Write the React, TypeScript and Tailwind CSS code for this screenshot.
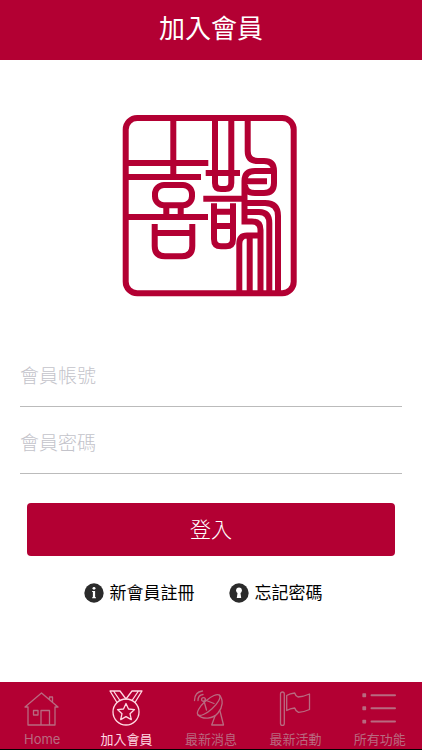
import type { ReactNode } from "react";

function SealLogo() {
  return (
    <svg
      viewBox="0 0 175 182"
      className="h-[182px] w-[175px]"
      fill="none"
      stroke="#b30033"
      strokeWidth="6"
      role="img"
      aria-label="喜鵲"
    >
      <rect x="3.7" y="3" width="168" height="175.3" rx="11.5" />
      <path d="M51.3 3V62M3.7 48H86.3M3.7 62H79" />
      <rect x="33" y="70" width="37" height="20.3" rx="9" />
      <path d="M44.3 91V101M58.7 91V101M3.7 102H86" />
      <path d="M32.7 109V131Q32.7 141.3 43 141.3H60Q70.3 141.3 70.3 131V109M32.7 118H70.3" />
      <path d="M93 3V68Q93 74 99 74H103.3Q109.3 74 109.3 68V3M83.7 58H118M81.3 83.7H124" />
      <path d="M92 88.3V124Q92 131.3 99 131.3H104Q111 131.3 111 124V88.3M92 96.7H111M92 111H111" />
      <path d="M125.7 3V36Q125.7 46 136 46H142Q152 46 152 56V68Q152 78 142 78H133Q123 78 123 70" />
      <path d="M151 56H133Q122.500 56 122.500 66V106.500H130Q138.500 106.500 138.500 115V178M125 66.300H145" />
      <path d="M122.500 97H137Q147.300 97 147.300 108V178M122.500 88H143Q156 88 156 101V178" />
      <path d="M138.500 120.500H125Q117.300 120.500 117.300 129V178M127.700 120.500V178" />
    </svg>
  );
}

function Field({ id, type, label }: { id: string; type: string; label: string }) {
  return (
    <label htmlFor={id} className="block border-b border-[#bbbbbb]">
      <input
        id={id}
        type={type}
        placeholder={label}
        aria-label={label}
        className="block h-[60px] w-full bg-transparent text-[19px] font-light text-black outline-none placeholder:text-[#c3c3ca]"
      />
    </label>
  );
}

function NavItem({ label, active, children }: { label: string; active?: boolean; children: ReactNode }) {
  return (
    <a
      href="#"
      aria-current={active ? "page" : undefined}
      className={
        active
          ? "flex flex-1 flex-col items-center gap-[5px] text-[#ffd9e3]"
          : "flex flex-1 flex-col items-center gap-[5px] text-[#b96a80]"
      }
    >
      <svg
        viewBox="0 0 36 36"
        className="size-9"
        fill="none"
        stroke="currentColor"
        strokeWidth="1.3"
        strokeLinejoin="round"
        strokeLinecap="round"
        aria-hidden="true"
      >
        {children}
      </svg>
      <span className="text-[13px] leading-4">{label}</span>
    </a>
  );
}

export default function App() {
  return (
    <div className="flex min-h-screen flex-col bg-white font-['Inter','Noto_Sans_CJK_TC',sans-serif]">
      <header className="flex h-[60px] items-center justify-center bg-[#b30033] pb-0.5">
        <h1 className="text-[26px] leading-8 text-white">加入會員</h1>
      </header>

      <main className="flex flex-1 flex-col px-5">
        <div className="flex justify-center pt-[55px] pr-1 pb-[49px]">
          <SealLogo />
        </div>

        <form className="flex flex-col gap-1.5" onSubmit={(e) => e.preventDefault()}>
          <Field id="account" type="text" label="會員帳號" />
          <Field id="password" type="password" label="會員密碼" />
          <button
            type="submit"
            className="mx-[7px] mt-[23px] h-[53px] rounded bg-[#b30033] text-[21px] font-light text-white"
          >
            登入
          </button>
        </form>

        <div className="mt-[25px] flex justify-center gap-[34px] pr-4 text-[17px] leading-6 text-black">
          <a href="#" className="flex items-center gap-1.5">
            <svg viewBox="0 0 18 18" className="size-5" aria-hidden="true">
              <circle cx="9" cy="9" r="8.700" fill="#2b2b2b" />
              <circle cx="9" cy="4.800" r="1.300" fill="#fff" />
              <path d="M7.300 7.200H10V12.800H10.800V13.800H7.300V12.800H8V8.200H7.300Z" fill="#fff" />
            </svg>
            新會員註冊
          </a>
          <a href="#" className="flex items-center gap-1.5">
            <svg viewBox="0 0 18 18" className="size-5" aria-hidden="true">
              <circle cx="9" cy="9" r="8.700" fill="#2b2b2b" />
              <circle cx="9" cy="6.600" r="2.600" fill="#fff" />
              <path d="M7.800 8H10.200L11 13.500H7Z" fill="#fff" />
            </svg>
            忘記密碼
          </a>
        </div>
      </main>

      <nav className="flex h-[68px] border-b border-black bg-[#b30033] pt-2">
        <NavItem label="Home">
          <path d="M1 17L17.500 3L34 17H31V35H4V17ZM17 35V20.500H25.500V35M9.500 20.500H14V25H9.500ZM25.500 9.500V7H28.500V12" />
        </NavItem>
        <NavItem label="加入會員" active>
          <circle cx="17" cy="22" r="13" />
          <path d="M17 13.500L19.500 19L25.500 19.600L21 23.700L22.300 29.600L17 26.600L11.700 29.600L13 23.700L8.500 19.600L14.500 19Z" />
          <path d="M8 12.500L1 1H11L17 9L23 1H33L26 12.500M4.500 1L11 10.500M29.500 1L23 10.500" />
        </NavItem>
        <NavItem label="最新消息">
          <ellipse cx="15.700" cy="15" rx="14.500" ry="5" transform="rotate(-42 15.700 15)" />
          <path d="M5 25C10 30 20 29 25 23C30 17 30.500 10 26.500 5.200" />
          <path d="M11 11L13.500 20M12 10L21 13.500" />
          <circle cx="10.500" cy="9.500" r="1.900" />
          <path d="M5 10.500Q5 5 10 4.500M1.500 10.500Q1.500 2 9.500 1M22 26L18.700 35H30.500L27 21" />
        </NavItem>
        <NavItem label="最新活動">
          <rect x="3.500" y="2" width="3.800" height="33.300" rx="1.900" />
          <path d="M9.700 5.500Q13 3.500 17.700 3Q18.500 6 21 7Q27 6.500 32.500 4V19.500Q27 22 21.500 22.300Q18.500 21 17.700 18Q13 18.500 9.700 20.500Z" />
        </NavItem>
        <NavItem label="所有功能">
          <path d="M9.500 5.300H33M9.500 18.300H33M9.500 31.500H33" strokeWidth="2" />
          <path d="M1 4H3.500V6.500H1ZM1 17H3.500V19.500H1ZM1 30.300H3.500V32.800H1Z" fill="currentColor" />
        </NavItem>
      </nav>
    </div>
  );
}
